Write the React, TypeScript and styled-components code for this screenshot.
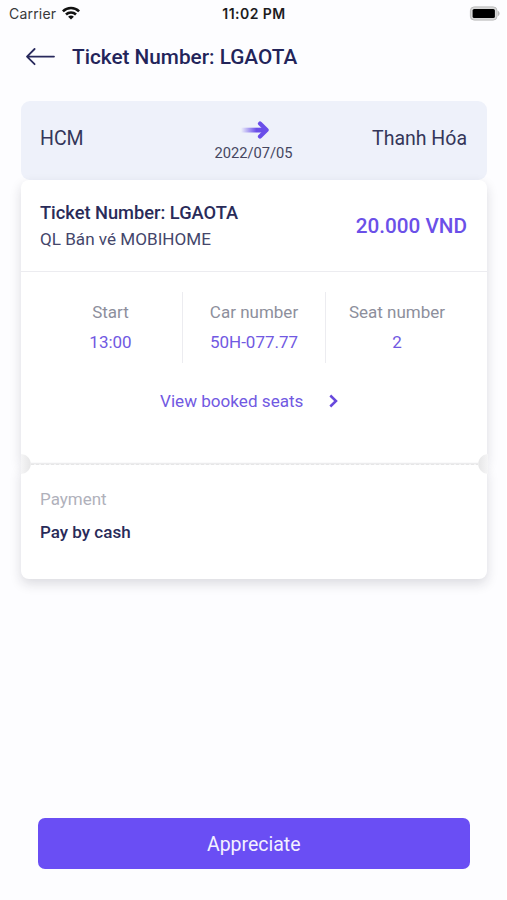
import React from 'react';
import styled, { createGlobalStyle } from 'styled-components';

const GlobalStyle = createGlobalStyle`
  * { box-sizing: border-box; }
  html, body { margin: 0; background: #fdfdff; }
  body { font-family: Roboto, "Liberation Sans", sans-serif; color: #2f325a; }
`;

const Screen = styled.main`
  width: 507px;
  height: 900px;
  display: flex;
  flex-direction: column;
  background: #fdfdff;
  border-right: 1px solid #fff;
  overflow: hidden;
`;

const StatusBar = styled.div`
  height: 26px;
  display: grid;
  grid-template-columns: 1fr auto 1fr;
  align-items: center;
  padding: 0 6px 0 9px;
  font-family: Inter, "Liberation Sans", sans-serif;
  color: #1c1c1e;
`;

const Carrier = styled.div`
  display: flex;
  align-items: center;
  gap: 6px;
  font-size: 14px;
  line-height: 18px;
  letter-spacing: 0.2px;
  color: #39393b;
  padding-top: 1px;
  svg { margin-top: -2px; }
`;

const Clock = styled.div`
  font-size: 14px;
  line-height: 18px;
  font-weight: 600;
  letter-spacing: 0.45px;
  margin-right: 1px;
  padding-top: 1px;
`;

const BatterySlot = styled.div`
  display: flex;
  justify-content: flex-end;
`;

const TitleBar = styled.header`
  height: 75px;
  display: flex;
  align-items: flex-start;
  gap: 17px;
  padding: 17px 0 0 25px;
  svg { margin-top: 4px; }
`;

const Title = styled.h1`
  margin: 0;
  font-size: 20.75px;
  line-height: 28px;
  font-weight: 500;
  color: #23245a;
`;

const Ticket = styled.section`
  width: 466.5px;
  margin-left: 20.5px;
  display: flex;
  flex-direction: column;
`;

const Route = styled.div`
  height: 79px;
  display: grid;
  grid-template-columns: 1fr auto 1fr;
  align-items: center;
  padding: 0 20px 0 19.5px;
  border-radius: 9px;
  background: #eef1fa;
`;

const Place = styled.span<{ $end?: boolean }>`
  font-size: 19.5px;
  line-height: 24px;
  padding-bottom: 3px;
  text-align: ${p => (p.$end ? 'right' : 'left')};
  color: #343659;
`;

const Journey = styled.div`
  display: flex;
  flex-direction: column;
  align-items: center;
  gap: 4px;
  padding-top: 1px;
  font-size: 14.7px;
  line-height: 18px;
  color: #45465f;
  svg { margin-left: 4px; }
`;

const Stub = styled.div<{ $height: number }>`
  height: ${p => p.$height}px;
  border-radius: 8px;
  background: #fff;
  box-shadow: 0 5px 12px rgba(30, 30, 50, 0.15);
`;

const Summary = styled.div`
  height: 92px;
  display: flex;
  justify-content: space-between;
  align-items: center;
  padding: 0 20px 0 19.5px;
  border-bottom: 1px solid #ececf0;
`;

const Heading = styled.div`
  font-size: 18.25px;
  line-height: 26px;
  font-weight: 500;
  color: #292b59;
`;

const Agency = styled.div`
  font-size: 17.1px;
  line-height: 26px;
  color: #44466b;
`;

const Price = styled.div`
  font-size: 20.7px;
  font-weight: 500;
  line-height: 26px;
  color: #6b50e8;
`;

const Details = styled.div`
  display: grid;
  grid-template-columns: repeat(3, 143px);
  margin: 20px 0 0 18.5px;
`;

const Detail = styled.div`
  height: 71px;
  display: flex;
  flex-direction: column;
  align-items: center;
  padding-top: 5px;
  line-height: 30px;
  font-size: 17px;
  & + & { border-left: 1px solid #ececf0; }
`;

const Label = styled.span`
  color: #8d8f9c;
`;

const Value = styled.span`
  color: #7159e2;
`;

const SeatsLink = styled.a`
  display: flex;
  justify-content: center;
  align-items: center;
  gap: 26px;
  margin-top: 24px;
  padding-right: 9px;
  font-size: 17.1px;
  line-height: 28px;
  color: #7159e2;
`;

const Perforation = styled.div`
  height: 0;
  position: relative;
  z-index: 1;
`;

const Tear = styled.svg`
  position: absolute;
  left: 0;
  top: -11px;
  display: block;
`;

const Payment = styled.div`
  padding: 21px 19.5px;
`;

const PaymentLabel = styled.div`
  font-size: 17px;
  line-height: 28px;
  color: #b0b1bb;
`;

const PaymentMethod = styled.div`
  margin-top: 6px;
  font-size: 17px;
  line-height: 27px;
  font-weight: 500;
  color: #292b59;
`;

const Submit = styled.button`
  width: 432.5px;
  height: 51px;
  margin: auto 0 31px 37.5px;
  border: 0;
  border-radius: 7px;
  background: #6a4ef4;
  color: #f4f1ff;
  font-family: inherit;
  font-size: 19.5px;
  line-height: 49px;
  padding: 2px 0 0;
`;

const Wifi = () => (
  <svg width="18" height="14" viewBox="0 0 18 14" fill="none" stroke="#111" strokeWidth="2.6">
    <path d="M0.9 5.4C5.4 0.9 12.6 0.9 17.1 5.4" />
    <path d="M4 8.5C6.8 5.8 11.2 5.8 14 8.5" />
    <path d="M6.1 10.7C7.8 9.2 10.2 9.2 11.9 10.7L9 13.5Z" fill="#111" stroke="none" />
  </svg>
);

const Battery = () => (
  <svg width="31" height="15" viewBox="0 0 31 15">
    <rect x="1.4" y="0.9" width="26.6" height="13.2" rx="3.8" fill="#d8d8d8" stroke="#bcbcbc" />
    <rect x="3.6" y="3" width="22.3" height="9" rx="1.6" fill="#000" />
    <path d="M28.8 4.8C31.2 5.8 31.2 9.2 28.8 10.2Z" fill="#b9b9b9" />
  </svg>
);

const BackArrow = () => (
  <svg width="30" height="20" viewBox="0 0 30 20" fill="none" stroke="#28295c" strokeWidth="1.8" strokeLinecap="round" strokeLinejoin="round">
    <path d="M29 9.6H2M9.6 2L2 9.6L9.6 17.2" />
  </svg>
);

const RouteArrow = () => (
  <svg width="28" height="20" viewBox="0 0 28 20" fill="none" strokeWidth="4.2" strokeLinecap="round" strokeLinejoin="round">
    <defs>
      <linearGradient id="tail" x1="0" y1="0" x2="22" y2="0" gradientUnits="userSpaceOnUse">
        <stop stopColor="#6a4ee9" stopOpacity="0" />
        <stop offset="0.7" stopColor="#6a4ee9" />
      </linearGradient>
    </defs>
    <rect x="0" y="7.7" width="23" height="4.8" fill="url(#tail)" />
    <path d="M19 3.6L25.6 10.1L19 16.6" stroke="#6a4ee9" />
  </svg>
);

const Chevron = () => (
  <svg width="9" height="14" viewBox="0 0 9 14" fill="none" stroke="#6748dc" strokeWidth="2.5">
    <path d="M1.3 1.5L7 7L1.3 12.5" />
  </svg>
);

const details = [
  { label: 'Start', value: '13:00' },
  { label: 'Car number', value: '50H-077.77' },
  { label: 'Seat number', value: '2' },
];

export default function App() {
  return (
    <>
      <GlobalStyle />
      <Screen>
        <StatusBar>
          <Carrier>Carrier <Wifi /></Carrier>
          <Clock>11:02 PM</Clock>
          <BatterySlot><Battery /></BatterySlot>
        </StatusBar>
        <TitleBar>
          <BackArrow />
          <Title>Ticket Number: LGAOTA</Title>
        </TitleBar>
        <Ticket>
          <Route>
            <Place>HCM</Place>
            <Journey><RouteArrow />2022/07/05</Journey>
            <Place $end>Thanh Hóa</Place>
          </Route>
          <Stub $height={284}>
            <Summary>
              <div>
                <Heading>Ticket Number: LGAOTA</Heading>
                <Agency>QL Bán vé MOBIHOME</Agency>
              </div>
              <Price>20.000 VND</Price>
            </Summary>
            <Details>
              {details.map(d => (
                <Detail key={d.label}>
                  <Label>{d.label}</Label>
                  <Value>{d.value}</Value>
                </Detail>
              ))}
            </Details>
            <SeatsLink>View booked seats <Chevron /></SeatsLink>
          </Stub>
          <Perforation>
            <Tear width="467" height="22" viewBox="0 0 467 22">
              <defs>
                <linearGradient id="notch" x1="0" x2="1">
                  <stop stopColor="#f5f5f6" />
                  <stop offset="1" stopColor="#e6e6e7" />
                </linearGradient>
                <linearGradient id="notchEnd" x1="1" x2="0">
                  <stop stopColor="#f5f5f6" />
                  <stop offset="1" stopColor="#e6e6e7" />
                </linearGradient>
              </defs>
              <rect x="3" y="2" width="461" height="18" fill="#fff" />
              <path d="M0 1C13 2 13 20 0 21Z" fill="url(#notch)" />
              <path d="M467 1C454 2 454 20 467 21Z" fill="url(#notchEnd)" />
              <path d="M10 10.7H457" stroke="#ececed" strokeWidth="1.8" />
              <path d="M10 11.5H457" stroke="#e6e6e7" strokeWidth="1" strokeDasharray="3 2" />
            </Tear>
          </Perforation>
          <Stub $height={115}>
            <Payment>
              <PaymentLabel>Payment</PaymentLabel>
              <PaymentMethod>Pay by cash</PaymentMethod>
            </Payment>
          </Stub>
        </Ticket>
        <Submit>Appreciate</Submit>
      </Screen>
    </>
  );
}
